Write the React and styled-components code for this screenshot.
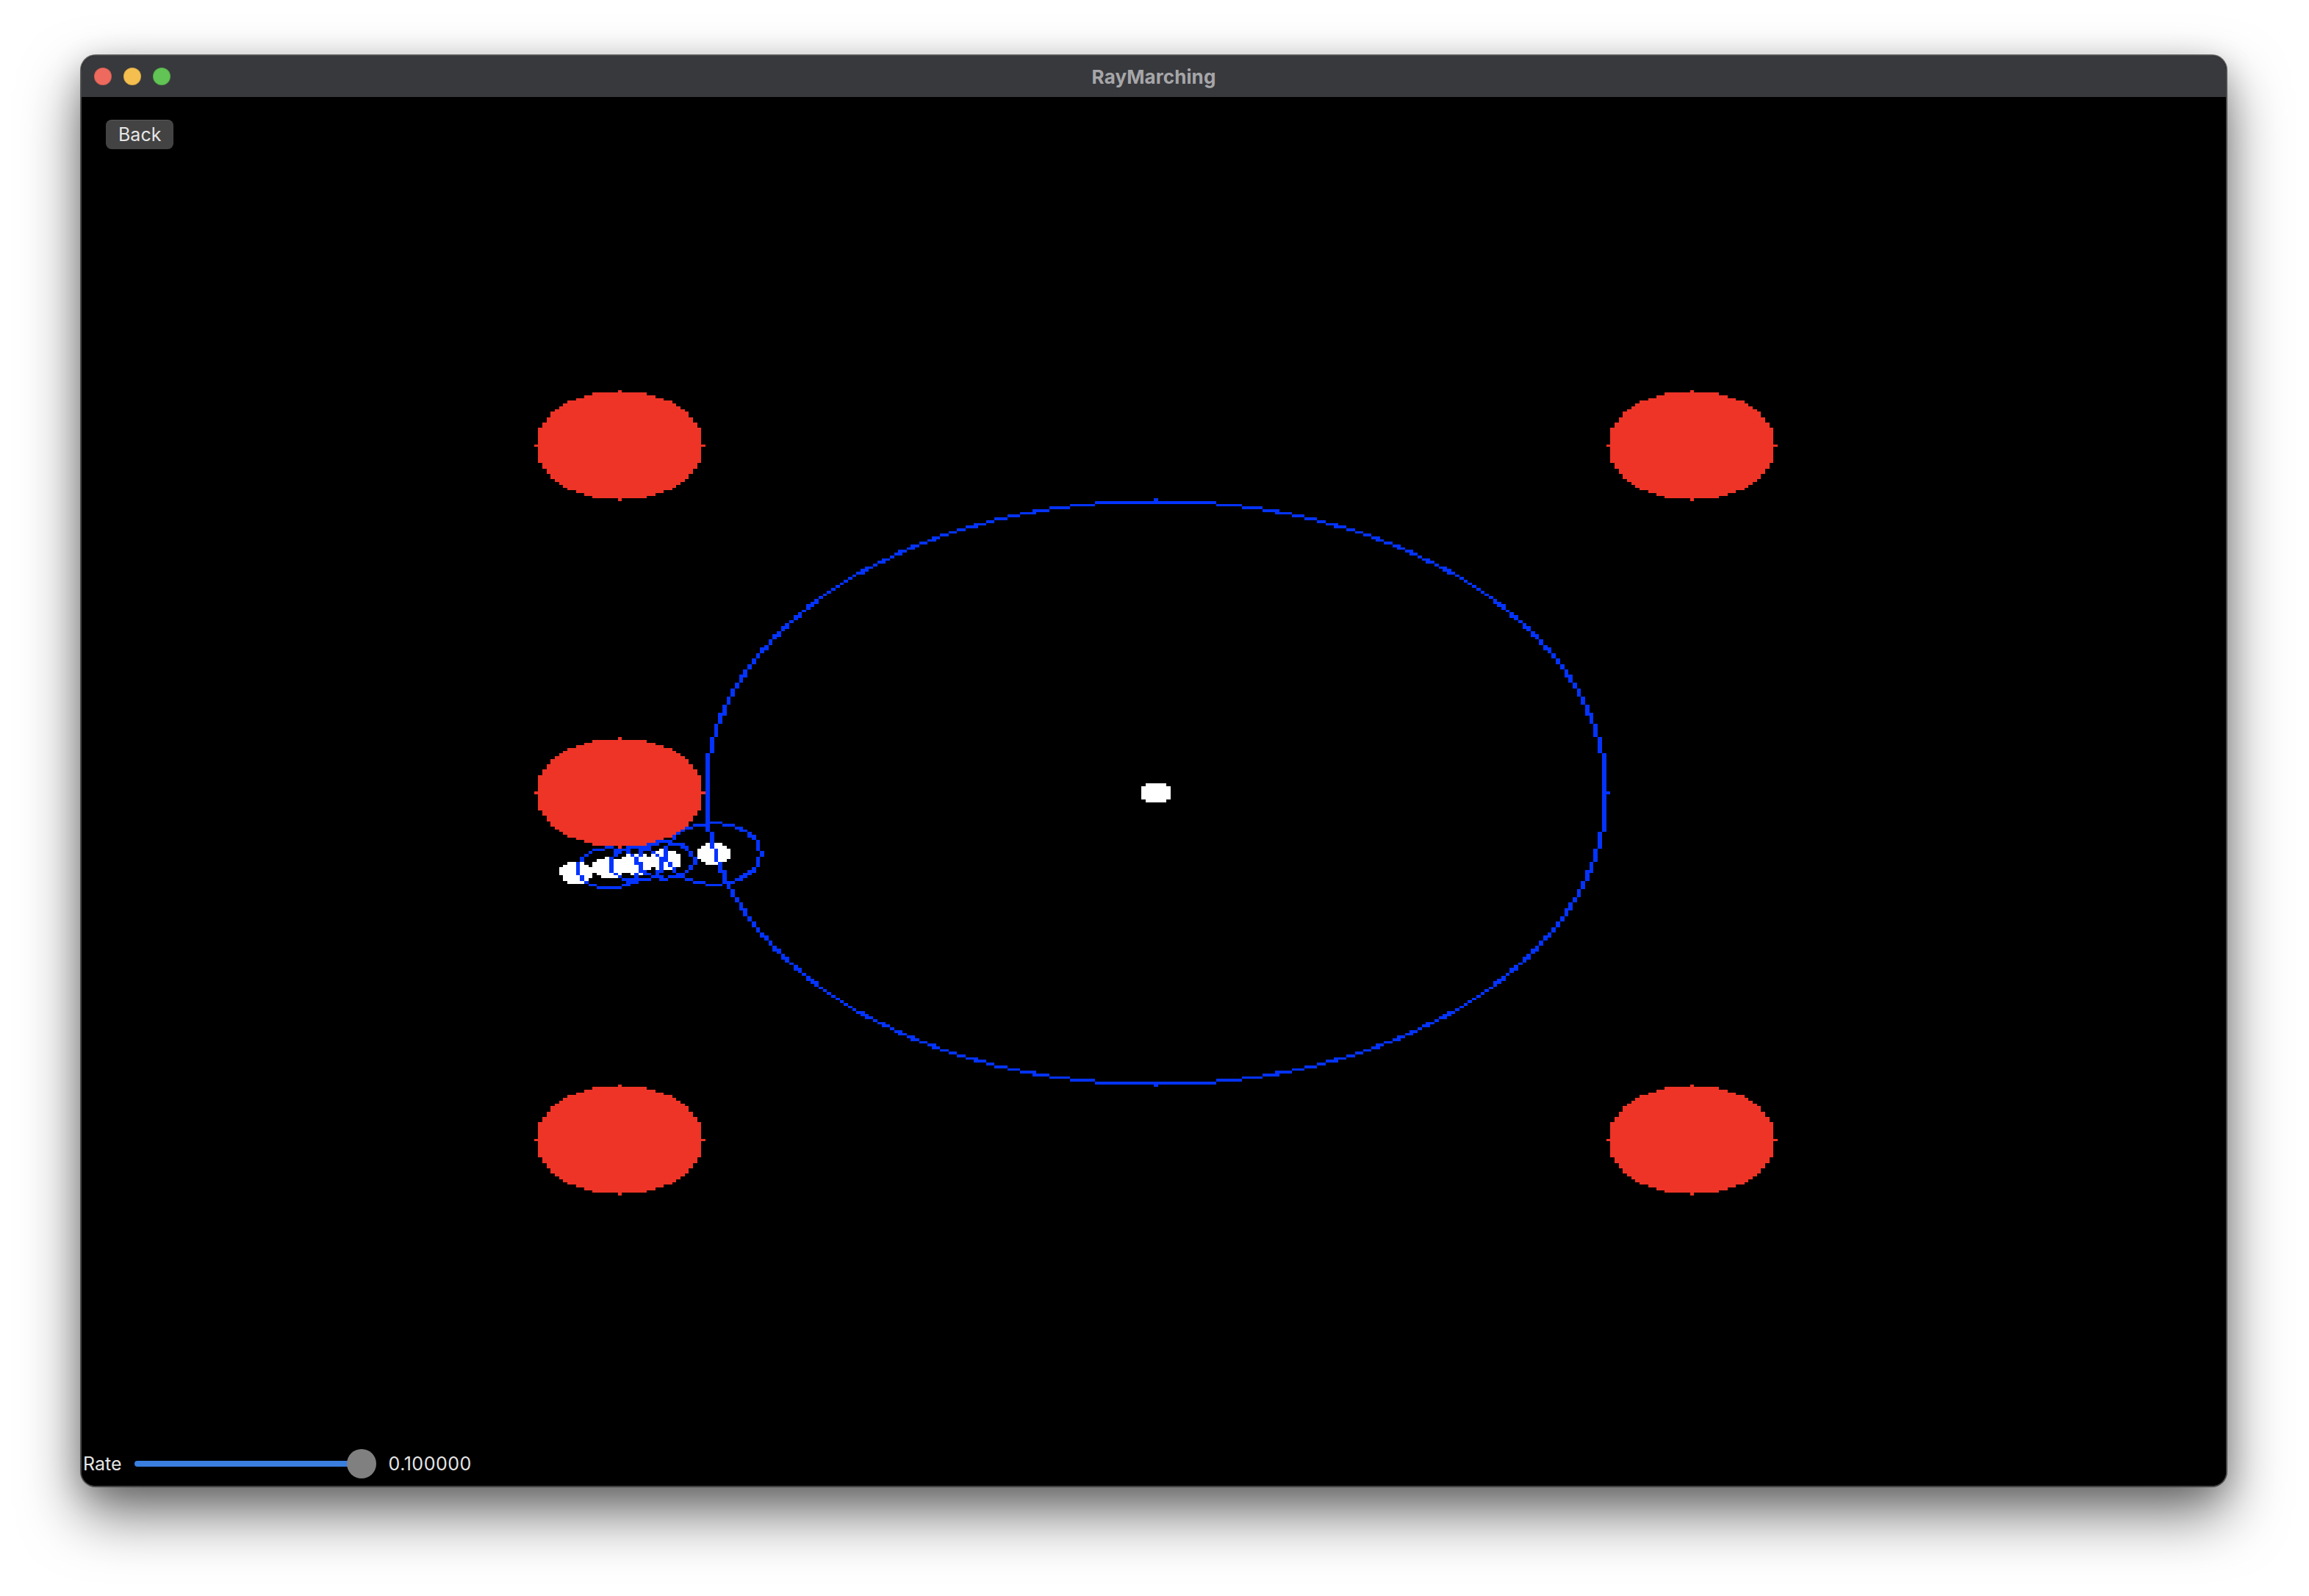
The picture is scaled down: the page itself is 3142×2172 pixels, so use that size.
import React, { useMemo } from "react";
import styled, { createGlobalStyle } from "styled-components";

const GlobalStyle = createGlobalStyle`
  html, body { margin: 0; padding: 0; background: #ffffff; }
  body { font-family: Inter, "Open Sans", "Liberation Sans", sans-serif; }
`;

/* ---------- scene model (512 x 512 grid, stretched over the view) ---------- */
const GRID = 512;
const RED_R = 20;
const RED_CIRCLES = [
  [128, 128],
  [384, 128],
  [128, 256],
  [128, 384],
  [384, 384],
];

function sdf(x, y) {
  let m = Infinity;
  for (const [cx, cy] of RED_CIRCLES) m = Math.min(m, Math.hypot(x - cx, y - cy) - RED_R);
  return m;
}

function march(angleDeg, steps) {
  const a = (angleDeg * Math.PI) / 180;
  const dx = Math.cos(a);
  const dy = Math.sin(a);
  let p = [256, 256];
  const points = [];
  const rings = [];
  for (let i = 0; i <= steps; i++) {
    points.push(p);
    const r = sdf(p[0], p[1]);
    if (i < steps) rings.push([p[0], p[1], r]);
    p = [p[0] + dx * r, p[1] + dy * r];
  }
  return { points, rings };
}

function pixelPath(test, x0, y0, x1, y1) {
  const lx = Math.max(0, Math.floor(x0));
  const ly = Math.max(0, Math.floor(y0));
  const hx = Math.min(GRID - 1, Math.ceil(x1));
  const hy = Math.min(GRID - 1, Math.ceil(y1));
  let d = "";
  for (let j = ly; j <= hy; j++) {
    let run = -1;
    for (let i = lx; i <= hx + 1; i++) {
      const inside = i <= hx && test(i, j);
      if (inside && run < 0) run = i;
      if (!inside && run >= 0) {
        d += `M${run} ${j}h${i - run}v1h${run - i}z`;
        run = -1;
      }
    }
  }
  return d;
}

function buildScene() {
  const { points, rings } = march(168, 5);
  let white = "";
  for (const [px, py] of points) {
    white += pixelPath(
      (i, j) => (i - px) ** 2 + (j - py) ** 2 < 16,
      px - 5, py - 5, px + 5, py + 5
    );
  }
  let blue = "";
  for (const [cx, cy, r] of rings) {
    blue += pixelPath(
      (i, j) => {
        const d = Math.hypot(i - cx, j - cy);
        return d >= r - 1 && d <= r;
      },
      cx - r - 2, cy - r - 2, cx + r + 2, cy + r + 2
    );
  }
  let red = "";
  for (const [cx, cy] of RED_CIRCLES) {
    red += pixelPath(
      (i, j) => (i - cx) ** 2 + (j - cy) ** 2 <= RED_R * RED_R,
      cx - RED_R - 1, cy - RED_R - 1, cx + RED_R + 1, cy + RED_R + 1
    );
  }
  return { white, blue, red };
}

/* ---------- styled parts ---------- */
const Stage = styled.div`
  width: 3142px;
  height: 2172px;
  box-sizing: border-box;
  padding: 75px 0 0 110px;
  background: #ffffff;
  overflow: hidden;
`;

const Window = styled.div`
  width: 2920px;
  height: 1948px;
  box-sizing: border-box;
  display: flex;
  flex-direction: column;
  border-radius: 20px;
  overflow: hidden;
  border: 1px solid #4a4a4c;
  background: #000;
  box-shadow: 0 0 0 1px rgba(0, 0, 0, 0.55), 0 38px 80px rgba(0, 0, 0, 0.55),
    0 10px 40px rgba(0, 0, 0, 0.2);
`;

const TitleBar = styled.div`
  height: 56px;
  flex: none;
  display: grid;
  grid-template-columns: 1fr auto 1fr;
  align-items: center;
  background: #38393d;
  padding: 0 17px;
`;

const Lights = styled.div`
  display: flex;
  gap: 16px;
`;

const Light = styled.span`
  width: 24px;
  height: 24px;
  border-radius: 50%;
  background: ${(p) => p.$color};
  box-shadow: inset 0 0 0 1px rgba(0, 0, 0, 0.12);
`;

const Title = styled.div`
  font-family: Inter, "Open Sans", "Liberation Sans", sans-serif;
  font-weight: 700;
  font-size: 26px;
  color: #a6a6a9;
  letter-spacing: 0.1px;
`;

const Content = styled.div`
  flex: 1;
  min-height: 0;
  display: grid;
  grid-template: 1fr / 1fr;
  background: #000;
`;

const Scene = styled.svg`
  grid-area: 1 / 1;
  display: block;
  width: 100%;
  height: 100%;
`;

const TopBar = styled.div`
  grid-area: 1 / 1;
  align-self: start;
  justify-self: start;
  padding: 31px 0 0 33px;
`;

const Button = styled.button`
  height: 40px;
  padding: 0 17px;
  border: none;
  border-radius: 8px;
  background: #434343;
  box-shadow: inset 0 1px 0 rgba(255, 255, 255, 0.1);
  color: #e6e6e6;
  font-family: Inter, "Open Sans", "Liberation Sans", sans-serif;
  font-size: 25px;
  line-height: 40px;
`;

const BottomBar = styled.div`
  grid-area: 1 / 1;
  align-self: end;
  justify-self: start;
  display: flex;
  align-items: center;
  padding: 0 0 10px 2px;
  font-family: Inter, "Open Sans", "Liberation Sans", sans-serif;
  font-size: 25px;
  color: #e4e4e4;
`;

const Label = styled.span`
  line-height: 40px;
  margin-right: 17px;
`;

const Slider = styled.div`
  display: flex;
  align-items: center;
  margin-right: 17px;
`;

const Fill = styled.div`
  width: ${(p) => p.$width}px;
  height: 8px;
  border-radius: 4px;
  background: #3a7ee0;
`;

const Thumb = styled.div`
  width: 40px;
  height: 40px;
  margin-left: -20px;
  border-radius: 50%;
  background: #808080;
`;

const Value = styled.span`
  line-height: 40px;
  letter-spacing: 0.5px;
`;

export default function App() {
  const scene = useMemo(buildScene, []);
  return (
    <>
      <GlobalStyle />
      <Stage>
        <Window>
          <TitleBar>
            <Lights>
              <Light $color="#ee6a5e" />
              <Light $color="#f5bf4f" />
              <Light $color="#61c454" />
            </Lights>
            <Title>RayMarching</Title>
            <span />
          </TitleBar>
          <Content>
            <Scene
              viewBox={`0 0 ${GRID} ${GRID}`}
              preserveAspectRatio="none"
              shapeRendering="crispEdges"
            >
              <path d={scene.white} fill="#ffffff" />
              <path d={scene.blue} fill="#0433ff" />
              <path d={scene.red} fill="#ee3427" />
            </Scene>
            <TopBar>
              <Button>Back</Button>
            </TopBar>
            <BottomBar>
              <Label>Rate</Label>
              <Slider>
                <Fill $width={309} />
                <Thumb />
              </Slider>
              <Value>0.100000</Value>
            </BottomBar>
          </Content>
        </Window>
      </Stage>
    </>
  );
}
